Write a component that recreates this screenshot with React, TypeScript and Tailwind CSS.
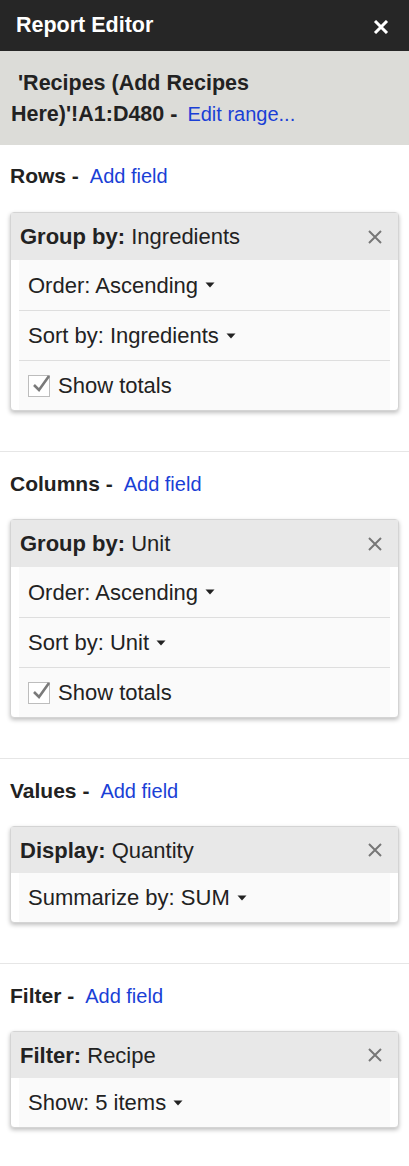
const font = { fontFamily: '"Liberation Sans", Arial, sans-serif' }

const Caret = () => (
  <svg width="10" height="6" viewBox="0 0 10 6" className="ml-[7px] inline-block">
    <path d="M0.5 0.5 L9.5 0.5 L5 5.5 Z" fill="#222" />
  </svg>
)

const CloseIcon = () => (
  <svg width="16" height="16" viewBox="0 0 16 16">
    <path d="M2 2 L14 14 M14 2 L2 14" stroke="#777" strokeWidth="2" />
  </svg>
)

const Check = () => (
  <span className="relative mr-[8px] inline-block h-[22px] w-[22px] border border-[#bdbdbd] bg-white">
    <svg width="22" height="22" viewBox="0 0 22 22" className="absolute left-[2px] top-[-4px]">
      <path d="M3 13 L8 18 L18 4" stroke="#7a7a7a" strokeWidth="2.6" fill="none" />
    </svg>
  </span>
)

type CardProps = {
  label: string
  value: string
  single?: boolean
  rows: { text: string; caret?: boolean; check?: boolean }[]
}

const Card = ({ label, value, rows, single }: CardProps) => (
  <div className="mx-[10px] rounded-[4px] border border-[#d4d4d4] bg-white shadow-[0_2px_4px_rgba(0,0,0,0.25)]">
    <div
      className={
        'flex items-center justify-between bg-[#e8e8e8] pl-[9px] pr-[15px] text-[22px] text-[#222] ' +
        (single ? 'h-[46px]' : 'h-[47px]')
      }
    >
      <div>
        <span className="font-bold">{label}</span> {value}
      </div>
      <CloseIcon />
    </div>
    <div className="mx-[8px] bg-[#fafafa]">
      {rows.map((r, i) => (
        <div
          key={i}
          className={
            'flex items-center pl-[9px] text-[22px] text-[#222] ' +
            (single ? 'h-[49px] ' : 'h-[50px] ') +
            (i > 0 ? 'border-t border-[#dedede]' : '')
          }
        >
          {r.check && <Check />}
          <span>{r.text}</span>
          {r.caret && <Caret />}
        </div>
      ))}
    </div>
  </div>
)

const Section = ({ title, last, first, children }: { title: string; last?: boolean; first?: boolean; children: any }) => (
  <div
    className={
      (first ? 'pt-[19px] ' : 'pt-[20px] ') +
      (last ? 'pb-[40px]' : 'border-b border-[#e6e6e6] pb-[40px]')
    }
  >
    <div className="flex h-[24px] items-center pl-[10px]">
      <span className="text-[21px] font-bold text-[#222]">{title} -</span>
      <span className="ml-[11px] text-[20px] text-[#1a3fd6]">Add field</span>
    </div>
    <div className={first ? 'mt-[24px]' : 'mt-[23px]'}>{children}</div>
  </div>
)

const App = () => {
  return (
    <div style={font} className="w-[409px] min-h-[1166px] bg-white">
      <div className="flex h-[51px] items-center justify-between bg-[#262626] pl-[16px] pr-[20px]">
        <h3 className="text-[21.5px] font-bold text-white">Report Editor</h3>
        <svg width="16" height="14" viewBox="0 0 16 14" className="mt-[3px]">
          <path d="M2 1 L14 13 M14 1 L2 13" stroke="#fff" strokeWidth="3" />
        </svg>
      </div>
      <div className="h-[94px] bg-[#dcdcd8] pl-[11px] pr-[10px] pt-[17px] text-[21.5px] font-bold leading-[31px] text-[#222]">
        <div className="pl-[7px]">'Recipes (Add Recipes</div>
        <div>
          Here)'!A1:D480 - <span className="ml-[4px] text-[20px] font-normal text-[#1a3fd6]">Edit range...</span>
        </div>
      </div>

      <Section title="Rows" first>
        <Card
          label="Group by:"
          value="Ingredients"
          rows={[
            { text: 'Order: Ascending', caret: true },
            { text: 'Sort by: Ingredients', caret: true },
            { text: 'Show totals', check: true },
          ]}
        />
      </Section>

      <Section title="Columns">
        <Card
          label="Group by:"
          value="Unit"
          rows={[
            { text: 'Order: Ascending', caret: true },
            { text: 'Sort by: Unit', caret: true },
            { text: 'Show totals', check: true },
          ]}
        />
      </Section>

      <Section title="Values">
        <Card label="Display:" value="Quantity" single rows={[{ text: 'Summarize by: SUM', caret: true }]} />
      </Section>

      <Section title="Filter" last>
        <Card label="Filter:" value="Recipe" single rows={[{ text: 'Show: 5 items', caret: true }]} />
      </Section>
    </div>
  )
}

export default App
